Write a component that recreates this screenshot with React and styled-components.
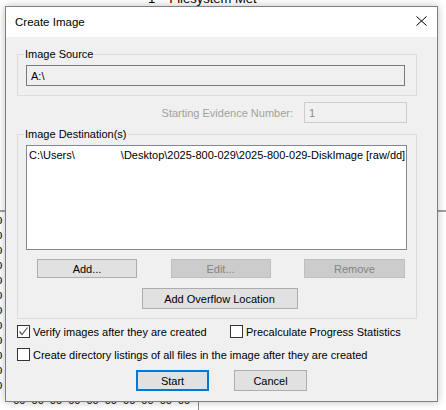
import React from "react";
import styled, { createGlobalStyle } from "styled-components";

const GlobalStyle = createGlobalStyle`
  html, body {
    margin: 0;
    padding: 0;
    background: #ffffff;
  }
  body {
    font-family: "Liberation Sans", Arial, sans-serif;
    font-size: 11px;
    color: #000;
    white-space: nowrap;
  }
`;

const Desktop = styled.div`
  position: relative;
  width: 446px;
  height: 410px;
  overflow: hidden;
  background: #ffffff;
`;

/* the application window behind the dialog */
const BackTitle = styled.div`
  display: flex;
  gap: 14px;
  padding: 0 0 0 148px;
  margin-top: -10px;
  height: 17px;
  font-size: 13px;
  line-height: 17px;
`;

const Divider = styled.div`
  margin-top: 203px;
  height: 2px;
  background: #a0a0a0;
`;

const HexPane = styled.div`
  display: flex;
  height: 199px;
`;

const HexColumn = styled.div`
  width: 198px;
  border-right: 1px solid #8a8a8a;
  display: flex;
  flex-direction: column;
  padding: 2px 0 0 0;
  font-family: "Liberation Mono", monospace;
  font-size: 11px;
  line-height: 15px;
`;

const HexLine = styled.div`
  white-space: pre;
  margin-left: ${(p) => p.$indent || 0}px;
  letter-spacing: ${(p) => p.$spacing || 0}px;
`;

const Dialog = styled.div`
  position: absolute;
  left: 5px;
  top: 6px;
  width: 431px;
  height: 394px;
  border: 1px solid #7f7f7f;
  background: #f0f0f0;
  box-shadow: 0 0 8px rgba(0, 0, 0, 0.25);
  display: flex;
  flex-direction: column;
`;

const TitleBar = styled.div`
  height: 30px;
  background: #ffffff;
  display: flex;
  align-items: center;
  justify-content: space-between;
  padding: 0 10px 0 9px;
  font-size: 11.5px;
`;

const CloseIcon = styled.svg`
  width: 11px;
  height: 10px;
  margin: 0 0 2px 0;
`;

const Body = styled.div`
  display: flex;
  flex-direction: column;
  padding: 10px 20px 0 11px;
`;

const Group = styled.fieldset`
  margin: 0;
  padding: 4px 11px 9px 8px;
  border: 1px solid #dcdcdc;
  display: flex;
  flex-direction: column;
  min-width: 0;
`;

const Legend = styled.legend`
  padding: 0 1px;
  margin-left: -2px;
  line-height: 14px;
`;

const TextBox = styled.div`
  height: 19px;
  border: 1px solid ${(p) => (p.$disabled ? "#cccccc" : "#7a7a7a")};
  background: #f0f0f0;
  color: ${(p) => (p.$disabled ? "#8a8a8a" : "#000")};
  display: flex;
  align-items: center;
  padding-left: 4px;
  width: ${(p) => (p.$width ? `${p.$width}px` : "auto")};
  box-sizing: content-box;
`;

const EvidenceRow = styled.div`
  display: flex;
  justify-content: flex-end;
  align-items: center;
  gap: 11px;
  padding-right: 10px;
  margin: 6px 0 4px;
  color: #a0a0a0;
`;

const ListBox = styled.div`
  height: 101px;
  border: 1px solid #828790;
  background: #ffffff;
  padding: 1px 2px;
  overflow: hidden;
  white-space: nowrap;
  line-height: 16px;
  margin-right: -2px;
`;

const Redacted = styled.span`
  display: inline-block;
  width: 46px;
`;

const ButtonRow = styled.div`
  display: flex;
  justify-content: space-between;
  padding: 0 0 0 11px;
  margin-top: 9px;
`;

const Button = styled.button`
  font: inherit;
  width: ${(p) => p.$w}px;
  height: ${(p) => p.$h || 19}px;
  padding: 0;
  background: ${(p) => (p.disabled ? "#cccccc" : "#e1e1e1")};
  border: ${(p) =>
    p.$default ? "2px solid #0078d7" : p.disabled ? "1px solid #bfbfbf" : "1px solid #adadad"};
  color: ${(p) => (p.disabled ? "#838383" : "#000")};
  box-sizing: border-box;
`;

const Center = styled.div`
  display: flex;
  justify-content: center;
  gap: ${(p) => p.$gap || 0}px;
  margin-top: ${(p) => p.$top || 0}px;
  padding-left: ${(p) => p.$shift || 0}px;
`;

const CheckRow = styled.div`
  display: flex;
  align-items: center;
  margin-top: ${(p) => p.$top || 0}px;
`;

const CheckItem = styled.label`
  display: flex;
  align-items: center;
  gap: 3px;
  width: ${(p) => (p.$w ? `${p.$w}px` : "auto")};
`;

const Box = styled.span`
  width: 11px;
  height: 11px;
  border: 1px solid #333333;
  background: #ffffff;
  display: flex;
  align-items: center;
  justify-content: center;
`;

function Check({ checked, label, w }) {
  return (
    <CheckItem $w={w}>
      <Box>
        {checked && (
          <svg width="11" height="11" viewBox="0 0 11 11">
            <polyline points="1.5,5.5 4,8.5 9.5,1.5" fill="none" stroke="#555" strokeWidth="1.2" />
          </svg>
        )}
      </Box>
      {label}
    </CheckItem>
  );
}

export default function App() {
  const hex = "00 00 00 00 00 00 00 00 00 00";
  return (
    <>
      <GlobalStyle />
      <Desktop>
        <BackTitle>
          <span>1</span>
          <span>Filesystem Met</span>
        </BackTitle>
        <Divider />
        <HexPane>
          <HexColumn>
            {Array.from({ length: 12 }).map((_, i) => (
              <HexLine key={i} $indent={-4}>0</HexLine>
            ))}
            <HexLine $indent={13} $spacing={-0.5}>{hex}</HexLine>
          </HexColumn>
        </HexPane>

        <Dialog>
          <TitleBar>
            <span>Create Image</span>
            <CloseIcon viewBox="0 0 11 10">
              <path d="M0.5 0.5 L10.5 9.5 M10.5 0.5 L0.5 9.5" stroke="#000" strokeWidth="1" />
            </CloseIcon>
          </TitleBar>
          <Body>
            <Group>
              <Legend>Image Source</Legend>
              <TextBox>A:\</TextBox>
            </Group>

            <EvidenceRow>
              <span>Starting Evidence Number:</span>
              <TextBox $disabled $width={97}>1</TextBox>
            </EvidenceRow>

            <Group>
              <Legend>Image Destination(s)</Legend>
              <ListBox>
                C:\Users\<Redacted />\Desktop\2025-800-029\2025-800-029-DiskImage [raw/dd]
              </ListBox>
              <ButtonRow>
                <Button $w={100}>Add...</Button>
                <Button $w={100} disabled>
                  Edit...
                </Button>
                <Button $w={101} disabled>
                  Remove
                </Button>
              </ButtonRow>
              <Center $top={10} $shift={8}>
                <Button $w={156} $h={21}>
                  Add Overflow Location
                </Button>
              </Center>
            </Group>

            <CheckRow $top={6}>
              <Check checked label="Verify images after they are created" w={213} />
              <Check label="Precalculate Progress Statistics" />
            </CheckRow>
            <CheckRow $top={10}>
              <Check label="Create directory listings of all files in the image after they are created" />
            </CheckRow>
            <Center $top={9} $gap={25} $shift={9}>
              <Button $w={73} $h={21} $default>
                Start
              </Button>
              <Button $w={73} $h={21}>
                Cancel
              </Button>
            </Center>
          </Body>
        </Dialog>
      </Desktop>
    </>
  );
}
